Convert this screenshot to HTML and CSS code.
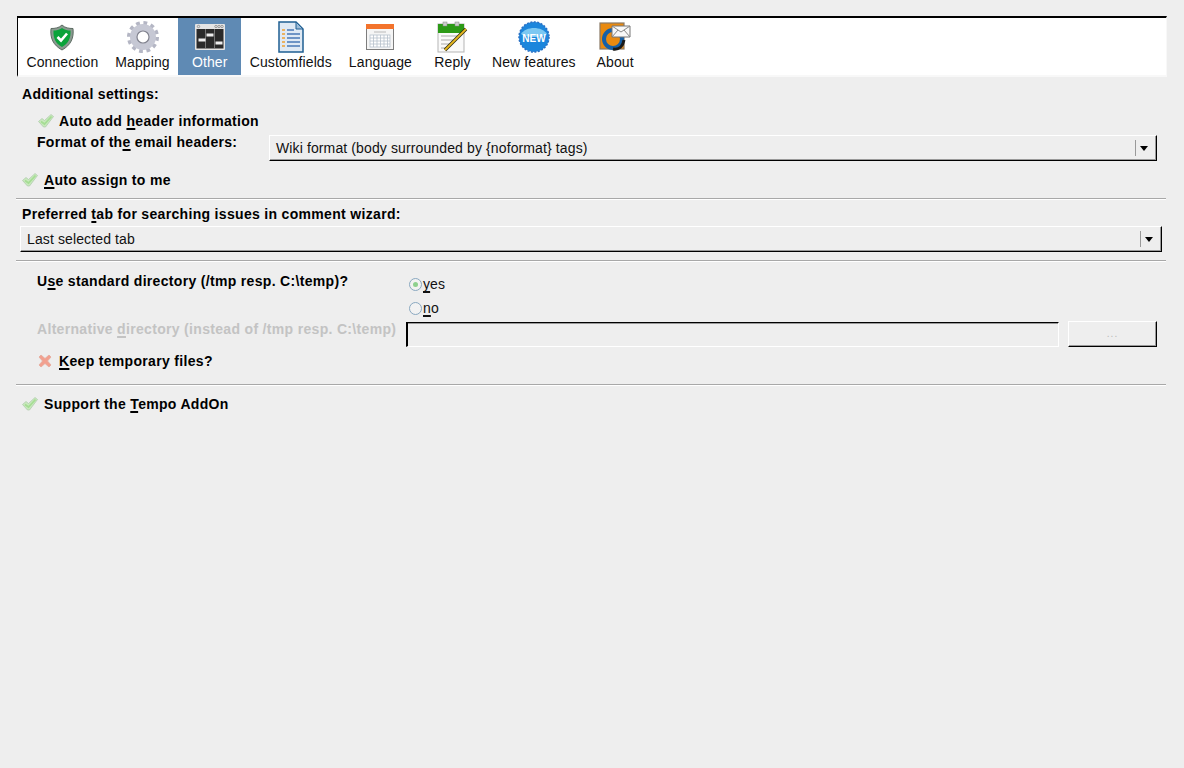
FILE: index.html
```html
<!DOCTYPE html>
<html lang="en">
<head>
<meta charset="utf-8">
<title>Settings</title>
<link rel="stylesheet" href="styles.css">
</head>
<body>
<svg class="defs" width="0" height="0" aria-hidden="true">
  <defs>
    <symbol id="check" viewBox="0 0 16 14">
      <path d="M0.500 7.500 L4 4.500 L6.500 6.500 L13 0.500 L15.500 2.500 L7.500 13 L5.500 13 Z" fill="#c9e9bd" stroke="#aac9a8" stroke-width=".7"/>
      <path d="M3 7.500 L6.500 10 L13.500 2.500" fill="none" stroke="#a5dd94" stroke-width="1.800"/>
    </symbol>
    <symbol id="cross" viewBox="0 0 14 14">
      <path d="M1 3 L3 1 L7 4.500 L11 1 L13 3 L9.500 7 L13 11 L11 13 L7 9.500 L3 13 L1 11 L4.500 7 Z" fill="#f2a08f" stroke="#e5a99c" stroke-width=".8"/>
    </symbol>
  </defs>
</svg>
<main class="page">
  <nav class="toolbar">
    <div class="tab">
      <svg class="ico" viewBox="-1 -1 32 32"><path d="M15 3 C18 6 22 6.500 26 6.500 C27 16 24 23 15 28 C6 23 3 16 4 6.500 C8 6.500 12 6 15 3Z" fill="#8a9a90" stroke="#5c6b62"/><path d="M15 6 C18 8 20.500 8.500 23.500 8.500 C24 16 21.500 21.500 15 25 C8.500 21.500 6 16 6.500 8.500 C9.500 8.500 12 8 15 6Z" fill="#0aa33a"/><path d="M10.500 15 L14 18.500 L20 11.500" fill="none" stroke="#fff" stroke-width="2.600"/></svg>
      <span>Connection</span>
    </div>
    <div class="tab">
      <svg class="ico" viewBox="0 0 32 32"><circle cx="16" cy="16" r="13.500" fill="none" stroke="#b4b6c4" stroke-width="5" stroke-dasharray="3.600 3.470"/><circle cx="16" cy="16" r="9.500" fill="none" stroke="#c6c8d4" stroke-width="7"/><circle cx="16" cy="16" r="6" fill="#fff" stroke="#80828e" stroke-width="1.200"/></svg>
      <span>Mapping</span>
    </div>
    <div class="tab tab-active">
      <svg class="ico" viewBox="-1 -3 32 32"><rect x="0" y="0" width="30" height="26" rx="1" fill="#e4e4e4"/><rect x="1.500" y="5" width="27" height="19.500" fill="#2a2a2a"/><g fill="none" stroke="#888" stroke-width=".8"><circle cx="3.500" cy="2.500" r="1.200"/><circle cx="21" cy="2.500" r="1.200"/><circle cx="24" cy="2.500" r="1.200"/><circle cx="27" cy="2.500" r="1.200"/><path d="M10.500 5V24.500M19.500 5V24.500"/></g><g fill="#eee"><rect x="3.500" y="14.500" width="7" height="3"/><rect x="11.500" y="9.500" width="7" height="3"/><rect x="20.500" y="17.500" width="7" height="3"/></g></svg>
      <span>Other</span>
    </div>
    <div class="tab">
      <svg class="ico" viewBox="0 0 26 32"><path d="M1 1 H18 L25 8 V31 H1Z" fill="#dfe9f4" stroke="#1f5f92" stroke-width="1.500"/><path d="M18 1 V8 H25Z" fill="#9dbcd8" stroke="#1f5f92"/><g stroke-width="1.500"><path d="M4 9 H7M4 13 H7M4 17 H7M4 21 H7M4 25 H7" stroke="#f0a030"/><path d="M9 9 H16M9 13 H22M9 17 H22M9 21 H22M9 25 H22" stroke="#4a78b5"/></g></svg>
      <span>Customfields</span>
    </div>
    <div class="tab">
      <svg class="ico" viewBox="-2 -3 32 32"><rect x=".5" y=".5" width="27" height="25" fill="#f5f5f5" stroke="#7d7d7d"/><rect x="0" y="0" width="28" height="5" fill="#f3732c"/><path d="M8 8 H20" stroke="#ccc" stroke-width="1.500"/><g fill="#fff" stroke="#b6c0cc" stroke-width=".8"><rect x="4" y="11" width="20" height="12"/><path d="M7.500 11V23M11 11V23M14.500 11V23M18 11V23M21.500 11V23M4 14H24M4 17H24M4 20H24" fill="none"/></g></svg>
      <span>Language</span>
    </div>
    <div class="tab">
      <svg class="ico" viewBox="-1 0 32 32"><rect x="1" y="3" width="26" height="28" fill="#fafafa" stroke="#b5b5b5"/><rect x="1" y="3" width="26" height="9" fill="#2c9a17"/><rect x="6" y="1" width="4" height="4" fill="#ccc" stroke="#888" stroke-width=".5"/><rect x="18" y="1" width="4" height="4" fill="#ccc" stroke="#888" stroke-width=".5"/><path d="M4 15H20M4 19H16M4 23H12M4 27H10" stroke="#aaa"/><path d="M8 29 L29 8" stroke="#2a2a10" stroke-width="3.400"/><path d="M8 29 L29 8" stroke="#e8b820" stroke-width="1.800"/></svg>
      <span>Reply</span>
    </div>
    <div class="tab tab-new">
      <svg class="ico" viewBox="0 0 32 32"><circle cx="16" cy="16" r="15" fill="#1c86dc" stroke="#2a70c4" stroke-width="1.500" stroke-dasharray="2 1.500"/><path d="M3 13 C8 5 24 5 29 13 C24 17 8 17 3 13Z" fill="#7cc8f2"/><text class="new-text" x="16" y="20.500" text-anchor="middle">NEW</text></svg>
      <span>New features</span>
    </div>
    <div class="tab">
      <svg class="ico" viewBox="0 -1 32 32"><rect x="1" y="1" width="24" height="26" fill="#e98a10" stroke="#8a7a66" stroke-width="1.200"/><circle cx="14" cy="17" r="9" fill="none" stroke="#1560a8" stroke-width="4"/><path d="M14 27 C20 28 24 24 25 18" fill="none" stroke="#1a1a1a" stroke-width="3"/><path d="M13 4 H31 V15 H13Z" fill="#f8f8f8" stroke="#777"/><path d="M13 4 L22 10 L31 4M13 15 L19 8M31 15 L25 8" fill="none" stroke="#888"/></svg>
      <span>About</span>
    </div>
  </nav>

  <section class="group group-a">
    <div class="row heading">Additional settings:</div>
    <div class="row row-indent check-row">
      <svg class="mark"><use href="#check"/></svg><span>Auto add <u>h</u>eader information</span>
    </div>
    <div class="row-indent format-row">
      <span class="row format-label">Format of th<u>e</u> email headers:</span>
      <div class="combo combo-format"><span class="combo-text">Wiki format (body surrounded by {noformat} tags)</span><i class="combo-sep"></i><i class="combo-arrow"></i></div>
    </div>
    <div class="row check-row assign">
      <svg class="mark"><use href="#check"/></svg><span><u>A</u>uto assign to me</span>
    </div>
  </section>

  <section class="group group-b">
    <div class="row heading">Preferred <u>t</u>ab for searching issues in comment wizard:</div>
    <div class="combo combo-tab"><span class="combo-text">Last selected tab</span><i class="combo-sep"></i><i class="combo-arrow"></i></div>
  </section>

  <section class="group group-c">
    <div class="dir-grid">
      <span class="row">U<u>s</u>e standard directory (/tmp resp. C:\temp)?</span>
      <div class="radios">
        <label class="radio"><i class="dot dot-on"></i><span><u>y</u>es</span></label>
        <label class="radio"><i class="dot"></i><span><u>n</u>o</span></label>
      </div>
    </div>
    <div class="alt-row">
      <span class="row alt-label">Alternative <u>d</u>irectory (instead of /tmp resp. C:\temp)</span>
      <div class="input"></div>
      <div class="browse">...</div>
    </div>
    <div class="row row-indent check-row keep">
      <svg class="mark mark-x"><use href="#cross"/></svg><span><u>K</u>eep temporary files?</span>
    </div>
  </section>

  <section class="group-d">
    <div class="row check-row">
      <svg class="mark"><use href="#check"/></svg><span>Support the <u>T</u>empo AddOn</span>
    </div>
  </section>
</main>
</body>
</html>
```
FILE: styles.css
```css
* { box-sizing: border-box; }
html, body { margin: 0; height: 100%; }
body {
  background: #eeeeee;
  color: #000;
  font: 14px/20px "Liberation Sans", Arial, sans-serif;
  overflow: hidden;
}
.defs { position: absolute; }
u { text-underline-offset: 2px; text-decoration-thickness: 2px; text-decoration-skip-ink: none; }
.page { padding: 16px 18px 0 16px; }

.toolbar {
  display: flex;
  width: 1150px;
  height: 61px;
  margin-left: 1px;
  background: #fff;
  border-top: 2px solid #000;
  border-left: 1px solid #000;
  border-right: 1px solid #f8f8f8;
  border-bottom: 2px solid #f8f8f8;
}
.tab {
  display: flex;
  flex-direction: column;
  align-items: center;
  min-width: 64px;
  height: 57px;
  padding: 3px 8.5px 0;
  color: #111;
  letter-spacing: .1px;
  white-space: nowrap;
}
.tab span { margin-top: -1px; line-height: 20px; }
.tab-active { width: 63px; min-width: 63px; background: #5f8ab4; color: #fff; }
.tab-new { padding-left: 7.5px; padding-right: 7.5px; }
.ico { display: block; width: 32px; height: 32px; flex: none; }
.new-text { font: bold 10px "Liberation Sans", Arial, sans-serif; fill: #fff; }

.row { font-weight: bold; letter-spacing: .32px; white-space: nowrap; }
.row-indent { margin-left: 21px; }
.heading { margin-left: 6px; }
.group { border-bottom: 1px solid #a8a8a8; box-shadow: 0 1px 0 #fff; width: 1150px; }
.group-a { padding-top: 7px; height: 122px; }
.group-a .check-row { height: 20px; }
.group-a .row-indent.check-row { margin-top: 7px; }
.check-row { display: flex; align-items: center; }
.mark { width: 16px; height: 14px; margin-left: 6px; margin-right: 6px; flex: none; }
.row-indent .mark { margin-left: 1px; margin-right: 5px; }
.row-indent .mark-x { width: 14px; margin-left: 1px; margin-right: 7px; }
.format-row { display: flex; align-items: flex-start; height: 38px; margin-top: 1px; }
.format-label { width: 232px; }
.combo {
  display: flex;
  align-items: center;
  height: 26px;
  background: #eeeeee;
  border-top: 1px solid #fff;
  border-left: 1px solid #fff;
  border-right: 1px solid #000;
  border-bottom: 1px solid #000;
  box-shadow: inset -1px -1px 0 #999;
  font-weight: normal;
  letter-spacing: .12px;
}
.combo-format { width: 888px; margin-top: 3px; }
.combo-text { flex: 1; padding-left: 6px; color: #111; }
.combo-sep { width: 1px; height: 16px; background: #999; margin-right: 4px; }
.combo-arrow {
  width: 0; height: 0; margin-right: 8px;
  border-left: 4.500px solid transparent;
  border-right: 4.500px solid transparent;
  border-top: 5px solid #000;
}

.group-b { padding-top: 5px; height: 62px; }
.combo-tab { width: 1142px; height: 26px; margin-left: 4px; margin-top: 2px; }

.group-c { height: 124px; padding-top: 10px; }
.dir-grid { display: flex; margin-left: 21px; }
.dir-grid > .row { width: 372px; }
.radios { display: flex; flex-direction: column; gap: 4px; margin-top: 3px; }
.radio { display: flex; align-items: center; gap: 1px; height: 20px; color: #111; letter-spacing: .1px; }
.dot {
  display: flex; align-items: center; justify-content: center;
  width: 13px; height: 13px;
  border: 1px solid #8aa8c0; border-radius: 50%;
  background: #f2f2f2;
}
.dot-on::after { content: ""; width: 5px; height: 5px; border-radius: 50%; background: #8ed08e; }
.alt-row { display: flex; align-items: flex-start; height: 26px; margin-top: 3px; margin-left: 21px; }
.alt-label { width: 369px; margin-top: -2px; color: #c3c3c3; }
.input {
  width: 653px; height: 25px; margin-top: 1px; margin-right: 9px;
  border-top: 1px solid #000; border-left: 2px solid #000;
  border-right: 1px solid #fff; border-bottom: 1px solid #fff;
  box-shadow: inset 0 1px 0 #999;
}
.browse {
  width: 89px; height: 26px;
  border-top: 1px solid #fff; border-left: 1px solid #fff;
  border-right: 1px solid #000; border-bottom: 1px solid #000;
  box-shadow: inset -1px -1px 0 #999;
  color: #b8b8b8; text-align: center; font-size: 10px; letter-spacing: 1px; line-height: 23px;
}
.keep { height: 20px; margin-top: 4px; }
.group-d { padding-top: 9px; }
```
